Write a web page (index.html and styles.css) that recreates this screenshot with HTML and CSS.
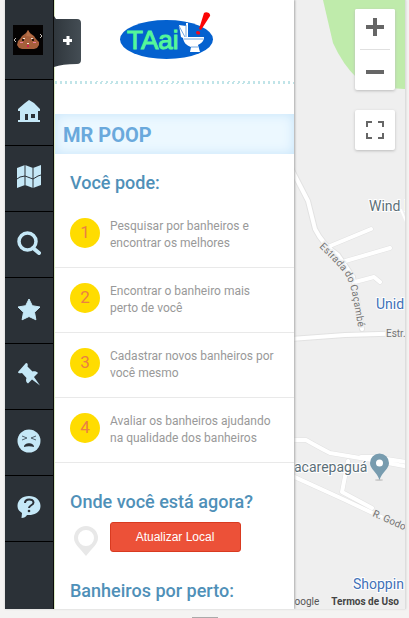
FILE: index.html
```html
<!DOCTYPE html>
<html lang="pt-BR">
<head>
<meta charset="utf-8">
<meta name="viewport" content="width=device-width, initial-scale=1">
<title>TAai</title>
<link rel="stylesheet" href="styles.css">
</head>
<body>
<div class="app">
  <nav class="rail" aria-label="Menu">
    <a class="tab tab-user" href="#perfil" aria-label="Perfil">
      <svg width="30" height="30" viewBox="0 0 30 30">
        <rect width="30" height="30" fill="#050303"/>
        <path d="M15 5l2 3 4 3 2 3 3 3v3l-2 3-3 1H9l-3-1-2-3 1-4 2-2 2-3 4-3z" fill="#a65f3b"/>
        <path d="M15 5l2 4 4 3-8-1z" fill="#b87049"/>
        <path d="M3 13l-2 2 2 2M27 9l2 2-2 2" fill="none" stroke="#c9c4bf"/>
        <path d="M9 14h2v2H9zM19 14h2v2h-2z" fill="#2a1410"/>
        <path d="M10 13h2v1h-2zM18 13h2v1h-2zM14 18h2v1h-2z" fill="#f4e3d2"/>
        <path d="M7 17h3v1H7zM20 17h3v1h-3z" fill="#ef7f9d"/>
        <path d="M14 20h2v2h-2z" fill="#d4204f"/>
      </svg>
    </a>
    <a class="tab" href="#inicio" aria-label="Início">
      <svg width="24" height="24" viewBox="0 0 24 24">
        <path d="M12 1l5 3 6 6v2h-2v9h2v2H1v-2h2v-9H1v-2l7-6z" fill="#c5e8f7"/>
        <path d="M8 15h3v6H8zM14 15h4v4h-4z" fill="#2b3137"/>
      </svg>
    </a>
    <a class="tab" href="#mapa" aria-label="Mapa">
      <svg width="24" height="24" viewBox="0 0 24 24">
        <path d="M0 3l8-3 8 3 8-3v20l-8 3-8-3-8 3z" fill="#c5e8f7"/>
        <path d="M8 0v20M16 3v20M0 14l3-2 5-1 8 3 5-3 3-1" fill="none" stroke="#2b3137"/>
      </svg>
    </a>
    <a class="tab" href="#busca" aria-label="Buscar">
      <svg width="24" height="24" viewBox="0 0 24 24">
        <circle cx="10.500" cy="10.500" r="8.500" fill="none" stroke="#c5e8f7" stroke-width="3.500"/>
        <path d="M16 17l6 5" stroke="#c5e8f7" stroke-width="4" stroke-linecap="round"/>
      </svg>
    </a>
    <a class="tab" href="#favoritos" aria-label="Favoritos">
      <svg width="24" height="24" viewBox="0 0 24 24">
        <path d="M12 2l3.300 6.700 7.700 1.300-5.500 5.300 1.400 7.500L12 19.500l-6.900 3.300 1.400-7.500L1 10l7.700-1.300z" fill="#c5e8f7" stroke="#c5e8f7" stroke-linejoin="round"/>
      </svg>
    </a>
    <a class="tab" href="#locais" aria-label="Locais">
      <svg width="24" height="24" viewBox="0 0 24 24">
        <path d="M9 0c2 0 2 2 1.500 3.500l5 5c2-.5 4.500 0 5.500 1.500l-4 4 6 8.500-8-6-4 4c-2-1-2.500-3.500-1.500-5.500l-4.500-5C3 10.500 1 10.500 1 9z" fill="#c5e8f7"/>
      </svg>
    </a>
    <a class="tab" href="#avaliar" aria-label="Avaliar">
      <svg width="24" height="24" viewBox="0 0 24 24">
        <circle cx="12" cy="12" r="11.500" fill="#c5e8f7"/>
        <path d="M5 7l5 2-5 2M19 7l-5 2 5 2" fill="none" stroke="#50626e"/>
        <path d="M7 18c0-5 10-5 10 0-3-1-7-1-10 0z" fill="#2b3137"/>
      </svg>
    </a>
    <a class="tab" href="#ajuda" aria-label="Ajuda">
      <svg width="24" height="24" viewBox="0 0 24 24">
        <path d="M12 1c6.500 0 11.500 4 11.500 10S18 20 12 20H10c-1 2-3 3-5.500 3L5 18C2 16 .5 14 .5 11 .5 5 5.500 1 12 1z" fill="#c5e8f7"/>
        <path d="M8 8c0-5 8.500-4.500 8.500-.5 0 3-4.500 2.500-4.500 5.500" fill="none" stroke="#2b3137" stroke-width="2"/>
        <circle cx="12" cy="16" r="1.300" fill="#2b3137"/>
      </svg>
    </a>
  </nav>

  <main class="panel">
    <button class="handle" type="button" aria-label="Expandir">
      <svg width="27" height="51" viewBox="0 0 27 51">
        <defs>
          <linearGradient id="shade"><stop stop-color="#30373d"/><stop offset="1" stop-color="#444d54"/></linearGradient>
        </defs>
        <path d="M0 0l2 3h21q4 0 4 4v37q0 4-4 4-15 0-23 3z" fill="url(#shade)"/>
        <path d="M14 20v9M9 24.500h9" stroke="#fff" stroke-width="3"/>
      </svg>
    </button>
    <header class="brand">
      <svg width="94" height="48" viewBox="0 0 94 48" role="img" aria-label="TAai">
        <ellipse cx="46.500" cy="27.500" rx="46.500" ry="19.500" fill="#0461cf"/>
        <text class="brand-name" x="7" y="37">TAai</text>
        <path d="M59 13l7 1V11h2v14h16c0 5-4 7-6 8l2 7h-10l1-5c-5-2-7-4-8-9l-2-1z" fill="#fff"/>
        <path d="M59 14l6 11M66 13v12M64 27h19M71 35h7" fill="none" stroke="#75a9e2"/>
        <path d="M84 1c2-2 7 0 6 3l-9 14-2-1z" fill="#fb0505"/>
        <path d="M76 20c1-2 5-1 4 2-1 1-4 1-4-2z" fill="#f10a1c"/>
      </svg>
    </header>
    <div class="stitch"></div>
    <h1 class="title">MR POOP</h1>
    <section>
      <h2 class="heading">Você pode:</h2>
      <ol class="steps">
        <li class="step"><span class="num">1</span><p class="text">Pesquisar por banheiros e encontrar os melhores</p></li>
        <li class="step"><span class="num">2</span><p class="text">Encontrar o banheiro mais perto de você</p></li>
        <li class="step"><span class="num">3</span><p class="text">Cadastrar novos banheiros por você mesmo</p></li>
        <li class="step"><span class="num">4</span><p class="text">Avaliar os banheiros ajudando na qualidade dos banheiros</p></li>
      </ol>
    </section>
    <section class="where">
      <h2 class="heading">Onde você está agora?</h2>
      <div class="locate">
        <svg class="pin" width="30" height="36" viewBox="0 0 30 36">
          <path d="M16 4a12 12 0 0 1 12 12c0 6-5 9-12 18C9 25 4 22 4 16A12 12 0 0 1 16 4zm0 4a8 8 0 1 0 0 16 8 8 0 0 0 0-16z" fill="#e8e8e8"/>
        </svg>
        <button class="update" type="button">Atualizar Local</button>
      </div>
    </section>
    <section class="near">
      <h2 class="heading">Banheiros por perto:</h2>
    </section>
  </main>

  <aside class="map" aria-label="Mapa">
    <svg class="streets" viewBox="294 0 111 609" preserveAspectRatio="xMinYMin slice">
      <rect x="294" width="400" height="609" fill="#efefef"/>
      <path d="M323 0l10 43q10 22 24 35 22 12 52 11V0z" fill="#bfebab"/>
      <g fill="none" stroke-linecap="round" stroke-linejoin="round">
        <g stroke="#e2e2e2">
          <path stroke-width="6" d="M290 166l18 35 7 28q8 16 23 26l15 22 9 52M290 339l55-4 70-2"/>
          <path stroke-width="5" d="M330 246l41-17M342 262l48-14M355 282l19-5 6 5M290 440h16q14 8 24 13l36 6 49 9M361 457h12l40 6M348 461l-6 31 30 16M290 475l55 25 70 33"/>
        </g>
        <g stroke="#fff">
          <path stroke-width="4" d="M290 166l18 35 7 28q8 16 23 26l15 22 9 52M290 339l55-4 70-2"/>
          <path stroke-width="4" d="M330 246l41-17M342 262l48-14M355 282l19-5 6 5M290 440h16q14 8 24 13l36 6 49 9M361 457h12l40 6M348 461l-6 31 30 16M290 475l55 25 70 33"/>
          <path stroke-width="2" d="M401 210l8 19"/>
        </g>
      </g>
      <path id="estrada" d="M319 247q15 14 25 26 6 8 9 25l7 40" fill="none"/>
      <g class="road">
        <text><textPath href="#estrada">Estrada do Caçambé</textPath></text>
        <text x="386" y="337">Estr.</text>
        <text transform="translate(372 516) rotate(24)">R. Godo</text>
      </g>
      <g class="place">
        <text class="dark" x="369" y="211">Wind I</text>
        <text class="blue" x="376" y="309">Unid</text>
        <text class="dark" x="294" y="472">acarepaguá</text>
        <text class="blue" x="353" y="589">Shoppin</text>
      </g>
      <ellipse cx="379" cy="480" rx="4" ry="1" fill="#ccc"/>
      <path d="M379.500 453.500a9.500 9.500 0 0 1 9.500 9.500c0 6-7 9-9.500 17-2.500-8-9.500-11-9.500-17a9.500 9.500 0 0 1 9.500-9.500z" fill="#789caf"/>
      <circle cx="379.500" cy="463" r="3.500" fill="#fff"/>
    </svg>
    <div class="controls">
      <div class="zoom">
        <button class="control" type="button" aria-label="Aumentar zoom">
          <svg width="18" height="18" viewBox="0 0 18 18"><path d="M9 0v18M0 9h18" stroke="#666" stroke-width="4"/></svg>
        </button>
        <button class="control" type="button" aria-label="Diminuir zoom">
          <svg width="18" height="18" viewBox="0 0 18 18"><path d="M0 9h18" stroke="#666" stroke-width="4"/></svg>
        </button>
      </div>
      <button class="control full" type="button" aria-label="Tela cheia">
        <svg width="18" height="18" viewBox="0 0 18 18"><path d="M1 6V1h5M12 1h5v5M17 12v5h-5M6 17H1v-5" fill="none" stroke="#666" stroke-width="2"/></svg>
      </button>
    </div>
    <div class="legal"><span class="credit">Google</span><a class="terms" href="#termos">Termos de Uso</a></div>
  </aside>
</div>
<div class="grip"></div>
</body>
</html>
```

FILE: styles.css
```css
* {
  box-sizing: border-box;
}

body {
  margin: 0;
  display: flex;
  flex-direction: column;
  height: 100vh;
  overflow: hidden;
  background: #f4f3f2;
  font-family: Roboto, "Liberation Sans", sans-serif;
}

.app {
  flex: 1;
  min-height: 0;
  display: flex;
  margin: 0 3px 0 5px;
  overflow: hidden;
  box-shadow: 0 0 2px #ccc;
}

.rail {
  flex: none;
  width: 49px;
  background: #2b3137;
  border-right: 1px solid #000;
}

.tab {
  display: flex;
  align-items: center;
  justify-content: center;
  height: 66px;
  padding-bottom: 3px;
  border-bottom: 1px solid #000;
}

.tab-user {
  height: 80px;
  padding: 0 2px 0 0;
}

.panel {
  position: relative;
  z-index: 1;
  flex: none;
  width: 240px;
  background: #fff;
  border-left: 1px solid #dcebc4;
  box-shadow: 1px 0 2px #aaa;
}

.handle {
  position: absolute;
  top: 16px;
  left: -1px;
  padding: 0;
  border: 0;
  background: none;
  line-height: 0;
}

.brand {
  display: flex;
  justify-content: center;
  padding: 12px 15px 0 0;
  height: 81px;
}

.brand-name {
  font: 26px "Liberation Sans", sans-serif;
  fill: #55f79a;
  stroke: #55f79a;
}

.stitch {
  height: 3px;
  background: repeating-linear-gradient(100deg, #c0e4e8 0 2px, #fff 2px 5px);
}

.title {
  margin: 30px 0 0;
  padding: 3px 8px 0;
  font-size: 20px;
  line-height: 37px;
  font-weight: 700;
  color: #6aa9dc;
  background: #ecf8ff;
  box-shadow: inset 0 0 12px #c6e4fa;
}

.heading {
  margin: 0;
  padding: 0 15px;
  font-size: 18px;
  line-height: 24px;
  font-weight: 500;
  color: #4f90b8;
}

.title + section {
  padding-top: 17px;
}

.steps {
  margin: 8px 0 0;
  padding: 0;
  list-style: none;
}

.step {
  display: flex;
  gap: 10px;
  height: 65px;
  padding: 15px 15px 0;
  border-bottom: 1px solid #e9e9e9;
}

.num {
  flex: none;
  width: 30px;
  height: 30px;
  border-radius: 50%;
  background: #ffdc00;
  color: #ea8043;
  font-size: 17px;
  line-height: 29px;
  text-align: center;
}

.text {
  margin: 0;
  font-size: 12px;
  line-height: 17px;
  color: #999;
}

.where {
  padding-top: 27px;
}

.locate {
  display: flex;
  gap: 10px;
  padding: 8px 15px 0;
}

.update {
  width: 131px;
  height: 30px;
  padding: 0 1px 0 0;
  border: 1px solid #d93a20;
  border-radius: 3px;
  background: #ec5138;
  color: #fff;
  font: 12px "Liberation Sans", sans-serif;
}

.near {
  padding-top: 21px;
}

.map {
  position: relative;
  flex: 1;
  min-width: 0;
  overflow: hidden;
  background: #efefef;
  border-right: 1px solid #ddd;
}

.streets {
  position: absolute;
  inset: 0;
  width: 100%;
  height: 100%;
}

.road {
  font-size: 10px;
  fill: #747474;
  stroke: #efefef;
  stroke-width: 3px;
  paint-order: stroke;
}

.place {
  font-size: 14px;
  stroke: #fff;
  stroke-width: 2px;
  paint-order: stroke;
}

.dark {
  fill: #5c6f78;
}

.blue {
  fill: #4272b8;
}

.controls {
  position: absolute;
  top: 9px;
  right: 10px;
  display: grid;
  gap: 20px;
}

.zoom,
.full {
  background: #fff;
  border-radius: 2px;
  box-shadow: 0 1px 3px #bbb;
}

.control {
  display: flex;
  align-items: center;
  justify-content: center;
  width: 40px;
  height: 40px;
  padding: 0;
  border: 0;
  background: #fff;
  border-radius: 2px;
}

.zoom .control {
  padding-bottom: 4px;
}

.zoom .control + .control {
  height: 41px;
  padding: 4px 0 0;
  background: linear-gradient(#e0e0e0, #e0e0e0) center top / 30px 1px no-repeat;
}

.legal {
  position: absolute;
  right: 0;
  bottom: 0;
  display: flex;
  gap: 12px;
  padding-right: 6px;
  font-size: 10px;
  line-height: 14px;
  color: #555;
  white-space: nowrap;
}

.terms {
  color: #444;
  font-weight: 700;
  text-decoration: none;
}

.grip {
  align-self: center;
  width: 26px;
  height: 1px;
  margin: 8px 0 0;
  background: #aaa;
}
```
